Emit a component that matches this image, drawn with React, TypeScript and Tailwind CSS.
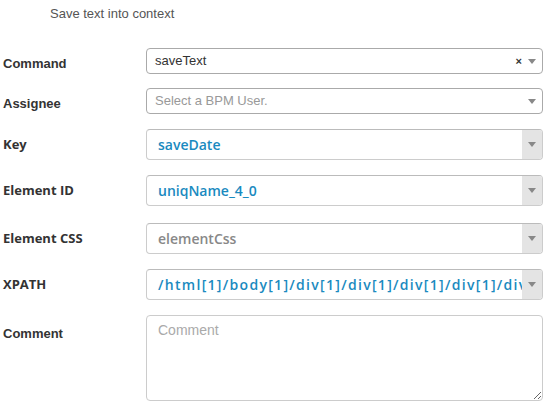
import React from 'react';

const arial = "font-['Liberation_Sans',Arial,sans-serif]";
const open = "font-['Open_Sans','DejaVu_Sans',sans-serif]";

const Caret: React.FC = () => (
    <svg width="8" height="5" viewBox="0 0 8 5" className="shrink-0">
        <path d="M0 0 L8 0 L4 5 Z" fill="#888" />
    </svg>
);

const Label: React.FC<{ text: string; sans?: boolean; drop?: boolean }> = ({ text, sans, drop }) => (
    <div className={`w-[146px] shrink-0 pl-[3px] text-[13px] font-bold text-[#333] ${drop ? 'pt-[5px]' : ''} ${sans ? open : arial}`}>
        {text}
    </div>
);

// combo field with grey caret button on the right
const ComboField: React.FC<{ value: string; tone: 'blue' | 'grey'; wide?: boolean }> = ({ value, tone, wide }) => (
    <div className="flex h-[31px] w-[397px] overflow-hidden rounded-[4px] border border-[#ccc] border-t-[#bbb] bg-white">
        <div
            className={`flex flex-1 items-center overflow-hidden whitespace-nowrap pl-[11px] text-[14px] font-semibold ${open} ${
                tone === 'blue' ? 'text-[#1a8ac0]' : 'text-[#888]'
            } ${wide ? 'tracking-[1.3px]' : ''}`}
        >
            {value}
        </div>
        <div className="flex w-[20px] items-center justify-center bg-[#e4e4e4]">
            <Caret />
        </div>
    </div>
);

export default function App() {
    return (
        <div className={`h-[410px] w-[550px] bg-white ${arial}`}>
            <div className="pl-[50px] pt-[6px] text-[13px] leading-[16px] text-[#555]">Save text into context</div>

            {/* Command */}
            <div className="mt-[26px] flex items-center">
                <Label text="Command" drop />
                <div className="flex h-[26px] w-[397px] items-center rounded-[4px] border border-[#aaa] bg-white pl-[8px] pr-[6px]">
                    <span className="flex-1 text-[13px] text-[#333]">saveText</span>
                    <span className="mr-[6px] text-[11px] font-bold leading-none text-[#333]">×</span>
                    <Caret />
                </div>
            </div>

            {/* Assignee */}
            <div className="mt-[14px] flex items-center">
                <Label text="Assignee" drop />
                <div className="flex h-[26px] w-[397px] items-center rounded-[4px] border border-[#aaa] bg-white pl-[8px] pr-[6px]">
                    <span className="flex-1 text-[13px] text-[#999]">Select a BPM User.</span>
                    <Caret />
                </div>
            </div>

            <div className="mt-[15px] flex items-center">
                <Label text="Key" sans />
                <ComboField value="saveDate" tone="blue" />
            </div>

            <div className="mt-[15px] flex items-center">
                <Label text="Element ID" sans />
                <ComboField value="uniqName_4_0" tone="blue" />
            </div>

            <div className="mt-[17px] flex items-center">
                <Label text="Element CSS" sans />
                <ComboField value="elementCss" tone="grey" />
            </div>

            <div className="mt-[15px] flex items-center">
                <Label text="XPATH" sans />
                <ComboField value="/html[1]/body[1]/div[1]/div[1]/div[1]/div[1]/div[1]/div[1]" tone="blue" wide />
            </div>

            {/* Comment */}
            <div className="mt-[15px] flex items-start">
                <div className="pt-[9px]">
                    <Label text="Comment" />
                </div>
                <textarea
                    placeholder="Comment"
                    className="h-[86px] w-[397px] resize-y rounded-[4px] border border-[#ccc] bg-white px-[11px] py-[4px] text-[14px] text-[#333] placeholder:text-[#aaa] focus:outline-none"
                />
            </div>
        </div>
    );
}
